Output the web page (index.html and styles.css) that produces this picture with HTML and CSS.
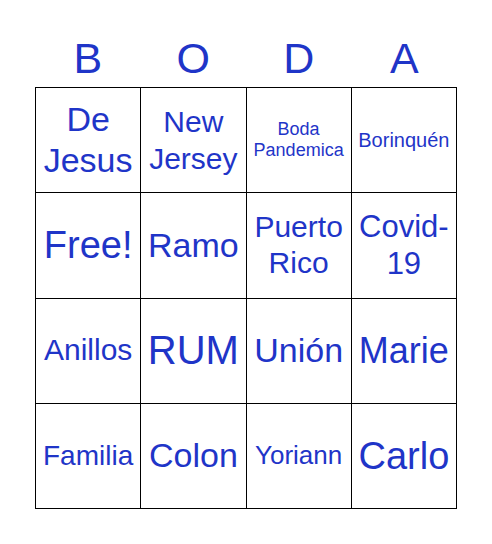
FILE: index.html
```html
<!DOCTYPE html>
<html lang="es">
<head>
<meta charset="utf-8">
<title>BODA Bingo</title>
<link rel="stylesheet" href="styles.css">
</head>
<body>
<div class="card">
  <div class="head">
    <div class="letter">B</div>
    <div class="letter">O</div>
    <div class="letter">D</div>
    <div class="letter">A</div>
  </div>
  <div class="grid">
    <div class="cell s34">De<br>Jesus</div>
    <div class="cell s30 lh125">New<br>Jersey</div>
    <div class="cell s18">Boda<br>Pandemica</div>
    <div class="cell s20">Borinquén</div>

    <div class="cell s38">Free!</div>
    <div class="cell s34">Ramo</div>
    <div class="cell s30">Puerto<br>Rico</div>
    <div class="cell s31">Covid-<br>19</div>

    <div class="cell s30">Anillos</div>
    <div class="cell s40">RUM</div>
    <div class="cell s34">Unión</div>
    <div class="cell s36">Marie</div>

    <div class="cell s28">Familia</div>
    <div class="cell s34">Colon</div>
    <div class="cell s26">Yoriann</div>
    <div class="cell s38">Carlo</div>
  </div>
</div>
</body>
</html>
```

FILE: styles.css
```css
html, body {
  margin: 0;
  padding: 0;
  background: #ffffff;
}

body {
  font-family: "Liberation Sans", Arial, sans-serif;
  color: #1f35c8;
}

.card {
  width: 422px;
  margin-left: 35px;
  padding-top: 34px;
}

.head {
  display: grid;
  grid-template-columns: repeat(4, 1fr);
  height: 53px;
}

.letter {
  text-align: center;
  font-size: 43px;
  line-height: 49px;
}

.grid {
  display: grid;
  grid-template-columns: repeat(4, 105.25px);
  grid-auto-rows: 105.25px;
  border-top: 1px solid #000;
  border-left: 1px solid #000;
  width: 421px;
}

.cell {
  display: flex;
  align-items: center;
  justify-content: center;
  text-align: center;
  border-right: 1px solid #000;
  border-bottom: 1px solid #000;
  line-height: 1.22;
  overflow: hidden;
}

.s18 { font-size: 18px; line-height: 1.17; }
.lh125 { line-height: 1.25; }

.s20 { font-size: 20px; }
.s26 { font-size: 26px; }
.s28 { font-size: 28px; }
.s30 { font-size: 30px; }
.s31 { font-size: 31px; }
.s34 { font-size: 34px; }
.s36 { font-size: 36px; }
.s38 { font-size: 38px; }
.s40 { font-size: 40px; }
```
